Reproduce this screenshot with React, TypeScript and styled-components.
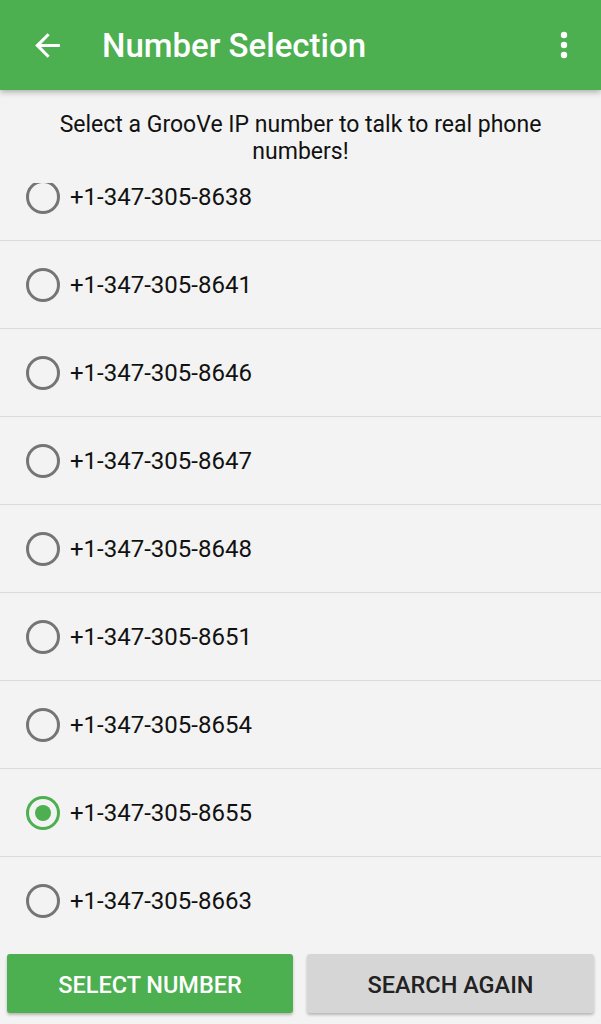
import React, { useState } from "react";
import styled, { createGlobalStyle } from "styled-components";

const Global = createGlobalStyle`
  html, body { margin: 0; padding: 0; }
  body { background: #f3f3f3; font-family: Roboto, "Noto Sans", sans-serif; }
  * { box-sizing: border-box; }
`;

const Screen = styled.div`
  width: 601px;
  height: 1024px;
  display: flex;
  flex-direction: column;
  background: #f3f3f3;
  overflow: hidden;
`;

const AppBar = styled.header`
  height: 90px;
  flex: none;
  background: #4caf50;
  display: flex;
  align-items: center;
  padding: 0 0 0 29px;
  box-shadow: 0 2px 6px rgba(0, 0, 0, 0.3);
  position: relative;
  z-index: 2;
`;

const IconButton = styled.button`
  height: 36px;
  padding: 0;
  border: 0;
  background: transparent;
  display: flex;
  align-items: center;
  justify-content: center;
  color: #fff;
`;

const Title = styled.h1`
  margin: 0 0 0 36px;
  flex: 1;
  font-size: 33px;
  font-weight: 500;
  color: #fff;
  letter-spacing: 0;
`;

const MenuButton = styled(IconButton)`
  margin-right: 33px;
`;

const Intro = styled.p`
  margin: 0;
  padding: 21px 20px 18px;
  flex: none;
  text-align: center;
  font-size: 23px;
  line-height: 27px;
  color: #111;
`;

const ListViewport = styled.div`
  flex: 1;
  overflow: hidden;
`;

const List = styled.ul`
  list-style: none;
  margin: -30px 0 0;
  padding: 0;
`;

const Row = styled.li`
  height: 88px;
  display: flex;
  align-items: center;
  padding-left: 26px;
  gap: 10px;
  border-bottom: 1.5px solid #dadada;
  cursor: pointer;
  &:last-child { border-bottom: 0; }
`;

const Radio = styled.span<{ $checked: boolean }>`
  width: 34px;
  height: 34px;
  border-radius: 50%;
  border: 3.5px solid ${(p) => (p.$checked ? "#4caf50" : "#757575")};
  display: flex;
  align-items: center;
  justify-content: center;
  flex: none;
  &::after {
    content: "";
    width: 16px;
    height: 16px;
    border-radius: 50%;
    background: #4caf50;
    display: ${(p) => (p.$checked ? "block" : "none")};
  }
`;

const Number = styled.span`
  font-size: 24px;
  color: #111;
`;

const ButtonBar = styled.div`
  flex: none;
  display: grid;
  grid-template-columns: 286px 287px;
  gap: 14px;
  padding: 9px 7px 11px;
`;

const ActionButton = styled.button<{ $primary?: boolean }>`
  height: 59px;
  padding-top: 3px;
  border: 0;
  border-radius: 3px;
  background: ${(p) => (p.$primary ? "#4caf50" : "#d6d6d6")};
  color: ${(p) => (p.$primary ? "#fff" : "#222")};
  font-family: Roboto, sans-serif;
  font-size: 23.5px;
  font-weight: 500;
  text-transform: uppercase;
  box-shadow: 0 2px 3px rgba(0, 0, 0, 0.25);
`;

const numbers = [
  "+1-347-305-8638",
  "+1-347-305-8641",
  "+1-347-305-8646",
  "+1-347-305-8647",
  "+1-347-305-8648",
  "+1-347-305-8651",
  "+1-347-305-8654",
  "+1-347-305-8655",
  "+1-347-305-8663",
];

export default function App() {
  const [selected, setSelected] = useState("+1-347-305-8655");
  return (
    <Screen>
      <Global />
      <AppBar>
        <IconButton aria-label="Back">
          <svg width="37" height="37" viewBox="0 0 24 24">
            <path
              d="M20 11H7.83l5.59-5.59L12 4l-8 8 8 8 1.41-1.41L7.83 13H20v-2z"
              fill="#fff"
            />
          </svg>
        </IconButton>
        <Title>Number Selection</Title>
        <MenuButton aria-label="More">
          <svg width="8" height="28" viewBox="0 0 8 28">
            <circle cx="4" cy="4" r="3.2" fill="#fff" />
            <circle cx="4" cy="14" r="3.2" fill="#fff" />
            <circle cx="4" cy="24" r="3.2" fill="#fff" />
          </svg>
        </MenuButton>
      </AppBar>
      <Intro>Select a GrooVe IP number to talk to real phone numbers!</Intro>
      <ListViewport>
        <List>
          {numbers.map((n) => (
            <Row key={n} onClick={() => setSelected(n)}>
              <Radio $checked={n === selected} />
              <Number>{n}</Number>
            </Row>
          ))}
        </List>
      </ListViewport>
      <ButtonBar>
        <ActionButton $primary>Select Number</ActionButton>
        <ActionButton>Search Again</ActionButton>
      </ButtonBar>
    </Screen>
  );
}
